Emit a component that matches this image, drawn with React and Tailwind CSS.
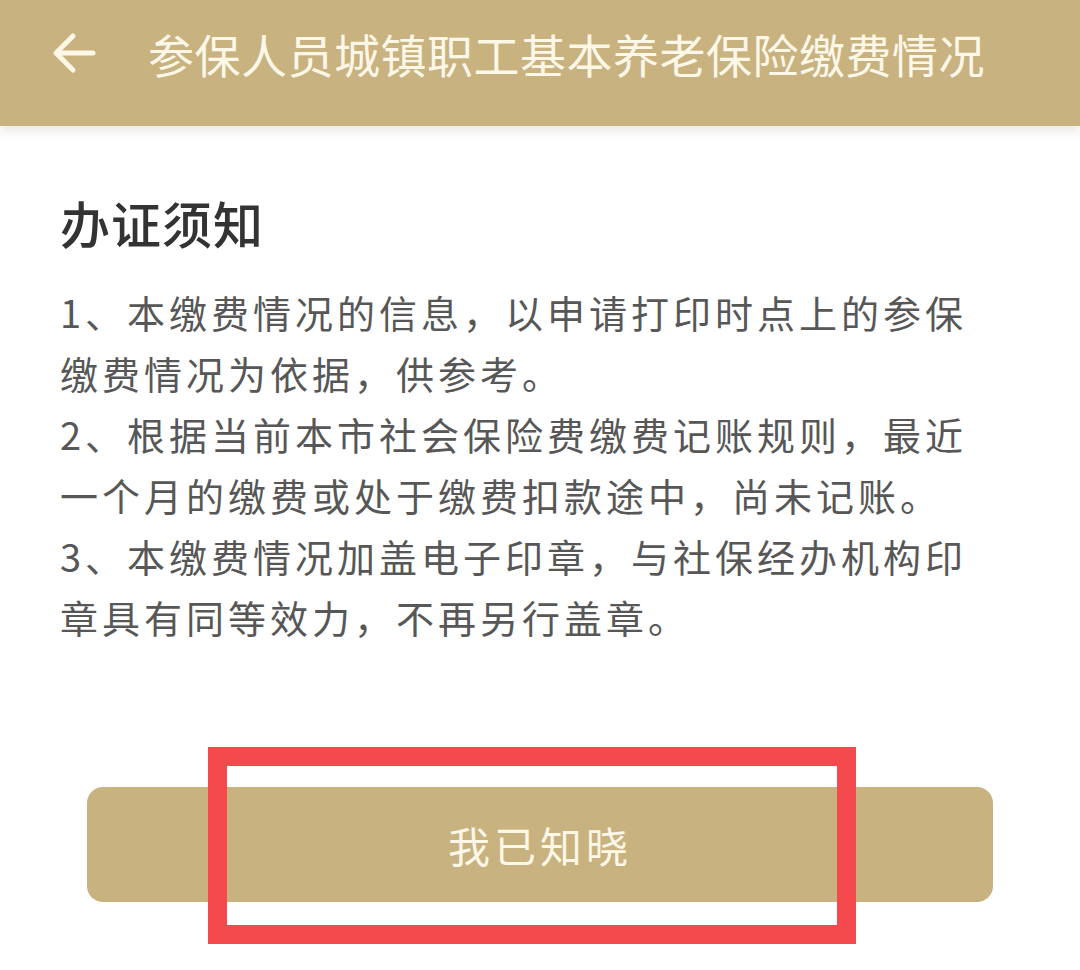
import React from 'react';

const notices = [
    '1、本缴费情况的信息，以申请打印时点上的参保缴费情况为依据，供参考。',
    '2、根据当前本市社会保险费缴费记账规则，最近一个月的缴费或处于缴费扣款途中，尚未记账。',
    '3、本缴费情况加盖电子印章，与社保经办机构印章具有同等效力，不再另行盖章。',
];

function BackArrow() {
    return (
        <svg width="44" height="44" viewBox="0 0 44 44" fill="none" aria-hidden="true">
            <path
                d="M41 22H5M21 5L4 22l17 17"
                stroke="#fdf7e8"
                strokeWidth="5"
                strokeLinecap="round"
                strokeLinejoin="round"
            />
        </svg>
    );
}

export default function App() {
    return (
        <main
            className="min-h-[970px] w-full overflow-hidden bg-white"
            style={{ fontFamily: '"Noto Sans CJK SC", "Noto Sans", sans-serif' }}
        >
            <header className="relative z-10 flex h-[126px] items-center bg-[#c8b280] pb-[20px] pl-[52px] shadow-[0_5px_10px_rgba(120,100,60,0.15)]">
                <button type="button" className="flex items-center">
                    <BackArrow />
                </button>
                <h1 className="ml-[52px] whitespace-nowrap text-[46px] leading-none tracking-[0.5px] text-[#fdf7e8]">
                    参保人员城镇职工基本养老保险缴费情况
                </h1>
            </header>

            <section className="px-[60px] pt-[64px]">
                <h2 className="text-[50px] font-medium leading-[65px] tracking-[1px] text-[#333333]">办证须知</h2>
                <div className="mt-[26px] w-[930px] text-[38px] leading-[61px] tracking-[4px] text-[#575757]">
                    {notices.map((line) => (
                        <p key={line}>{line}</p>
                    ))}
                </div>

                <div className="relative mx-[27px] mt-[140px]">
                    <button
                        type="button"
                        className="flex h-[115px] w-full items-center justify-center rounded-[16px] bg-[#c8b280] text-[42px] tracking-[4px] text-[#fdf7e8]"
                    >
                        我已知晓
                    </button>
                    <div className="pointer-events-none absolute left-[121px] top-[-40px] h-[197px] w-[648px] border-[19px] border-[#f44a4e]" />
                </div>
            </section>
        </main>
    );
}
